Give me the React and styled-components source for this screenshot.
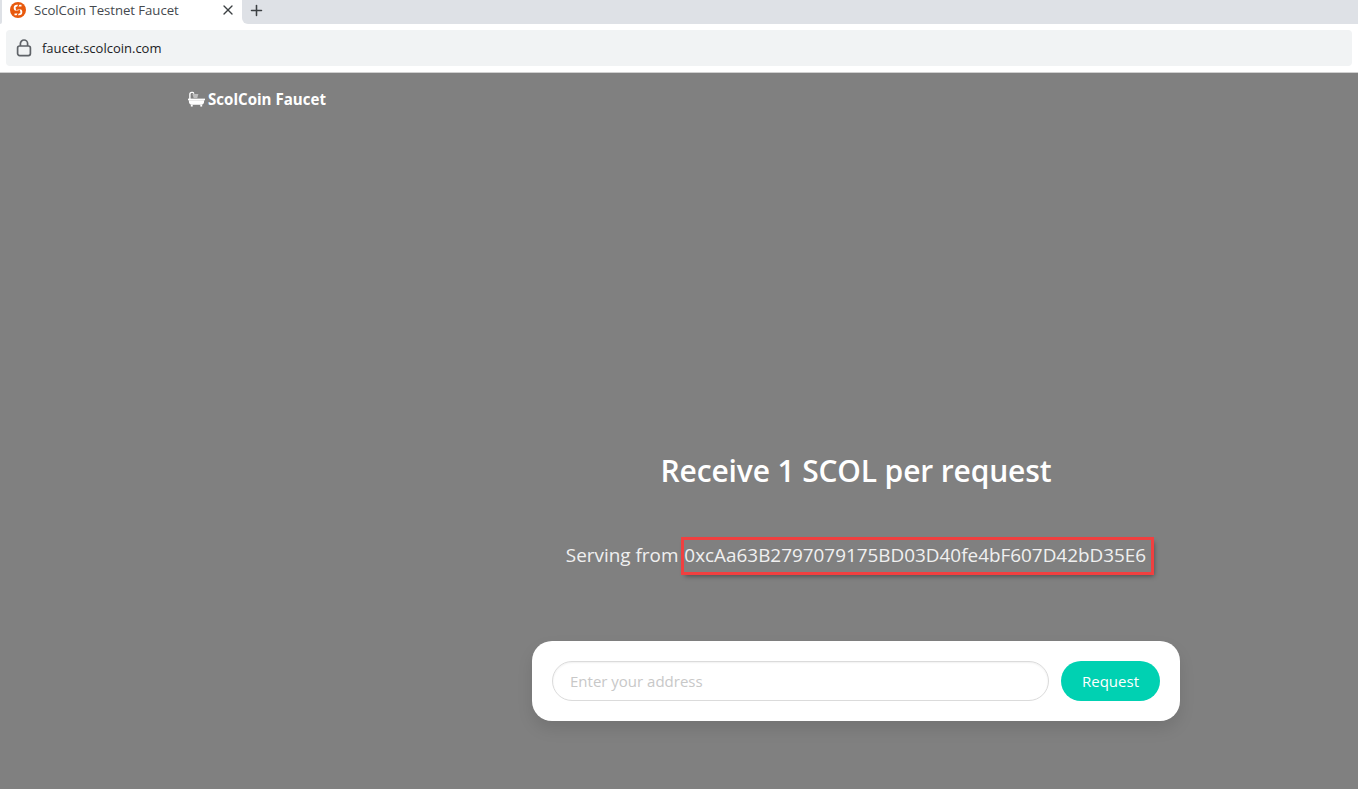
import styled, { createGlobalStyle } from 'styled-components'
import { X, Plus } from 'lucide-react'

const colors = {
  page: '#808080',
  strip: '#dee1e6',
  omni: '#f1f3f4',
  accent: '#00d1b2',
  alert: '#f04040',
}

const Global = createGlobalStyle`
  html, body { margin: 0; padding: 0; height: 100%; overflow: hidden; }
  body { font-family: "Open Sans", "Noto Sans", sans-serif; background: ${colors.page}; }
`

const TabIcon = () => (
  <svg width="16" height="16" viewBox="0 0 16 16">
    <circle cx="8" cy="8" r="8" fill="#e8590c" />
    <path d="M11.5 3.6 H7 Q4.6 3.6 4.6 6 Q4.6 8 7 8 H9 Q11.4 8 11.4 10 Q11.4 12.4 9 12.4 H4.5" fill="none" stroke="#fff" strokeWidth="1.8" />
    <path d="M9 2 L6.5 8 H9.5 L7 14" fill="none" stroke="#e8590c" strokeWidth="1.2" />
  </svg>
)

const LockIcon = () => (
  <svg width="16" height="18" viewBox="0 0 16 18" fill="none" stroke="#5f6368" strokeWidth="1.7">
    <rect x="1.6" y="7" width="12.8" height="9.6" rx="2" />
    <path d="M4.4 7 V4.6 a3.6 3.6 0 0 1 7.2 0 V7" />
  </svg>
)

const BathIcon = () => (
  <svg width="17" height="16" viewBox="0 0 18 16">
    <path d="M2 8 V3 Q2 1 4 1 H5 Q6 1 6 2.4" fill="none" stroke="#fff" strokeWidth="1.5" />
    <path d="M4.6 2.6 H11 L9.8 7 H6 Z" fill="#bdbdbd" />
    <rect x="0" y="7.6" width="18" height="1.8" fill="#fff" />
    <path d="M1 9.4 H17 V11 Q17 14 14 14 H4 Q1 14 1 11 Z" fill="#fff" />
    <rect x="3" y="14" width="2" height="2" fill="#fff" />
    <rect x="13" y="14" width="2" height="2" fill="#fff" />
  </svg>
)

function App() {
  return (
    <Page>
      <Global />
      <Chrome>
        <TabStrip>
          <StripEdge />
          <Tab>
            <TabIcon />
            <TabTitle>ScolCoin Testnet Faucet</TabTitle>
            <X size={16} color="#3c4043" strokeWidth={2} />
          </Tab>
          <StripRest>
            <NewTab>
              <Plus size={17} color="#3c4043" strokeWidth={2.2} />
            </NewTab>
          </StripRest>
        </TabStrip>
        <Toolbar>
          <Omnibox>
            <LockIcon />
            <Url>faucet.scolcoin.com</Url>
          </Omnibox>
        </Toolbar>
      </Chrome>
      <Navbar>
        <Brand>
          <BathIcon />
          ScolCoin Faucet
        </Brand>
      </Navbar>
      <Main>
        <Title>Receive 1 SCOL per request</Title>
        <Serving>
          Serving from <Address>0xcAa63B2797079175BD03D40fe4bF607D42bD35E6</Address>
        </Serving>
        <Card>
          <AddressInput placeholder="Enter your address" />
          <RequestButton>Request</RequestButton>
        </Card>
      </Main>
    </Page>
  )
}

export default App

const Page = styled.div`
  height: 100vh;
  display: flex;
  flex-direction: column;
  background: ${colors.page};
`

const Chrome = styled.div`
  background: #fff;
  border-bottom: 1px solid #d0d0d0;
`

const TabStrip = styled.div`
  height: 24px;
  display: flex;
  align-items: stretch;
  background: #fff;
`

const StripEdge = styled.div`
  width: 2px;
  background: ${colors.strip};
  border-bottom-right-radius: 2px;
`

const Tab = styled.div`
  width: 240px;
  box-sizing: border-box;
  padding: 0 6px 4px 8px;
  display: flex;
  align-items: center;
  background: #fff;
`

const TabTitle = styled.span`
  flex: 1;
  margin-left: 8px;
  font-size: 13.2px;
  letter-spacing: -0.05px;
  color: #45494e;
`

const StripRest = styled.div`
  flex: 1;
  display: flex;
  background: ${colors.strip};
  border-bottom-left-radius: 6px;
`

const NewTab = styled.div`
  width: 28px;
  padding-bottom: 4px;
  display: flex;
  align-items: center;
  justify-content: center;
`

const Toolbar = styled.div`
  height: 48px;
  padding: 6px;
  box-sizing: border-box;
  background: #fff;
`

const Omnibox = styled.div`
  height: 36px;
  display: flex;
  align-items: center;
  padding: 0 10px;
  background: ${colors.omni};
  border-radius: 4px;
`

const Url = styled.span`
  margin-left: 10px;
  font-size: 13px;
  color: #202124;
`

const Navbar = styled.div`
  height: 54px;
  box-sizing: border-box;
  padding: 0 0 2px 188px;
  display: flex;
  align-items: center;
`

const Brand = styled.div`
  display: flex;
  align-items: center;
  gap: 3px;
  font-size: 15.1px;
  font-weight: 700;
  color: #fff;
`

const Main = styled.div`
  width: 648px;
  margin-left: 532px;
  padding-top: 325px;
  display: flex;
  flex-direction: column;
  align-items: center;
`

const Title = styled.h1`
  margin: 0;
  font-size: 30px;
  font-weight: 600;
  letter-spacing: -0.15px;
  line-height: 38px;
  color: #fff;
`

const Serving = styled.p`
  margin: 49px 0 0 6px;
  font-size: 18.9px;
  line-height: 30px;
  color: #f0f0f0;
  white-space: nowrap;
`

const Address = styled.span`
  display: inline-block;
  padding: 1px 6px 3px 1px;
  outline: 3px solid ${colors.alert};
  outline-offset: -1px;
  box-shadow: 2px 3px 5px rgba(0, 0, 0, 0.45);
`

const Card = styled.div`
  align-self: stretch;
  margin-top: 68px;
  height: 80px;
  box-sizing: border-box;
  padding: 20px;
  display: flex;
  gap: 12px;
  background: #fff;
  border-radius: 20px;
  box-shadow: 0 8px 16px rgba(0, 0, 0, 0.1);
`

const AddressInput = styled.input`
  flex: 1;
  min-width: 0;
  height: 40px;
  box-sizing: border-box;
  padding: 0 17px;
  border: 1px solid #dbdbdb;
  border-radius: 20px;
  outline: none;
  font-family: inherit;
  font-size: 15px;
  box-shadow: inset 0 1px 2px rgba(10, 10, 10, 0.06);
  &::placeholder { color: #c8c8c8; }
`

const RequestButton = styled.button`
  width: 99px;
  height: 40px;
  border: 0;
  border-radius: 20px;
  background: ${colors.accent};
  color: #fff;
  font-family: inherit;
  font-size: 15px;
`
